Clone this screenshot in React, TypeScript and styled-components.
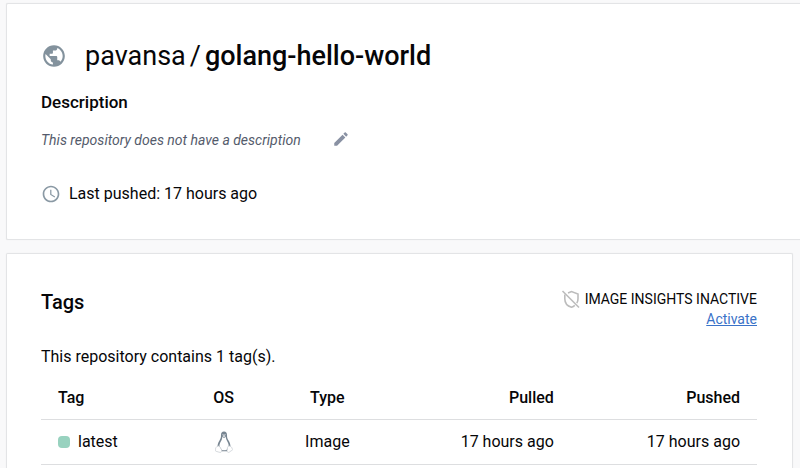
import React from "react";
import styled, { createGlobalStyle } from "styled-components";

const GlobalStyle = createGlobalStyle`
  *, *::before, *::after { box-sizing: border-box; }
  body {
    margin: 0;
    background: #f9f9fa;
    color: #060608;
    font-family: Roboto, "Open Sans", sans-serif;
    font-size: 16px;
    line-height: 20px;
  }
`;

const Page = styled.main`
  display: flex;
  flex-direction: column;
  gap: 13px;
  height: 100vh;
  overflow: hidden;
  padding: 3px 0 0 6px;
`;

const Card = styled.section<{ $bleed?: "right" | "bottom" }>`
  flex: ${(p) => (p.$bleed === "bottom" ? "1 0 auto" : "none")};
  margin-right: ${(p) => (p.$bleed === "right" ? "0" : "7px")};
  padding: 35px 35px 0 34px;
  background: #fff;
  border: 1px solid #e3e4e6;
  border-right-width: ${(p) => (p.$bleed === "right" ? "0" : "1px")};
  border-bottom-width: ${(p) => (p.$bleed === "bottom" ? "0" : "1px")};
  border-radius: ${(p) => (p.$bleed === "right" ? "2px 0 0 2px" : "2px 2px 0 0")};
  box-shadow: 0 0 1px #e3e4e6;
`;

const RepoHeading = styled.div`
  display: flex;
  align-items: center;
  gap: 18px;
`;

const RepoName = styled.h1`
  display: flex;
  gap: 4px;
  margin: 0;
  font-size: 27px;
  line-height: 34px;
  font-weight: 400;
  white-space: nowrap;
`;

const RepoSlug = styled.span`
  font-weight: 500;
`;

const DescriptionTitle = styled.h2`
  margin: 19px 0 0;
  font-size: 17px;
  line-height: 20px;
  font-weight: 500;
`;

const DescriptionRow = styled.div`
  display: flex;
  align-items: center;
  gap: 31px;
  margin-top: 18px;
`;

const EmptyDescription = styled.em`
  color: #545b6b;
  font-size: 14px;
`;

const EditButton = styled.button`
  display: flex;
  padding: 0 0 2px;
  border: 0;
  background: none;
  cursor: pointer;
`;

const PushedRow = styled.div`
  display: flex;
  align-items: center;
  gap: 8px;
  margin: 34px 0 35px;
`;

const TagsHeader = styled.header`
  display: flex;
  justify-content: space-between;
  align-items: flex-start;
`;

const TagsTitle = styled.h2`
  margin: 1px 0 0;
  font-size: 20px;
  line-height: 24px;
  font-weight: 500;
`;

const Insights = styled.div`
  display: flex;
  flex-direction: column;
  align-items: flex-end;
  font-size: 14px;
`;

const InsightsStatus = styled.div`
  display: flex;
  align-items: center;
  gap: 4px;
`;

const ActivateLink = styled.a`
  color: #3a72c8;
  text-decoration: underline;
`;

const TagCount = styled.p`
  margin: 18px 0 10px;
`;

const TagTable = styled.table`
  width: 100%;
  table-layout: fixed;
  border-collapse: collapse;
`;

const Column = styled.col<{ $width: number }>`
  width: ${(p) => p.$width}%;
`;

type Align = "left" | "center" | "right";

const HeadCell = styled.th<{ $align: Align }>`
  height: 42px;
  padding: 0 17px;
  border-bottom: 1px solid #dddee0;
  font-weight: 500;
  text-align: ${(p) => p.$align};
`;

const Cell = styled.td<{ $align: Align }>`
  height: 45px;
  padding: 0 17px;
  border-bottom: 1px solid #dddee0;
  text-align: ${(p) => p.$align};
`;

const TagLabel = styled.span`
  display: flex;
  align-items: center;
  gap: 8px;
`;

const StatusDot = styled.span`
  width: 12px;
  height: 12px;
  border-radius: 4px;
  background: #98d2bf;
`;

const Icon = styled.svg`
  display: block;
  flex: none;
`;

const CellIcon = styled(Icon)`
  margin: 0 auto;
`;

const GlobeIcon = () => (
  <Icon width="26" height="26" viewBox="0 0 24 24" fill="#83929d" aria-hidden="true">
    <path d="M12 2C6.48 2 2 6.48 2 12s4.48 10 10 10 10-4.48 10-10S17.52 2 12 2zm-1 17.93c-3.95-.49-7-3.85-7-7.93 0-.62.08-1.21.21-1.79L9 15v1c0 1.1.9 2 2 2v1.93zm6.9-2.54c-.26-.81-1-1.39-1.9-1.39h-1v-3c0-.55-.45-1-1-1H8v-2h2c.55 0 1-.45 1-1V7h2c1.1 0 2-.9 2-2v-.41c2.93 1.19 5 4.06 5 7.41 0 2.08-.8 3.97-2.1 5.39z" />
  </Icon>
);

const PencilIcon = () => (
  <Icon width="18" height="18" viewBox="0 0 24 24" fill="#8991a3" aria-hidden="true">
    <path d="M3 17.25V21h3.75L17.81 9.94l-3.75-3.75L3 17.25zM20.71 7.04c.39-.39.39-1.02 0-1.41l-2.34-2.34c-.39-.39-1.02-.39-1.41 0l-1.83 1.83 3.75 3.75 1.83-1.83z" />
  </Icon>
);

const ClockIcon = () => (
  <Icon width="20" height="20" viewBox="0 0 24 24" fill="#8a99a4" aria-hidden="true">
    <path d="M11.99 2C6.47 2 2 6.48 2 12s4.47 10 9.99 10C17.52 22 22 17.52 22 12S17.52 2 11.99 2zM12 20c-4.42 0-8-3.58-8-8s3.58-8 8-8 8 3.58 8 8-3.58 8-8 8zm.5-13H11v6l5.25 3.15.75-1.23-4.5-2.67z" />
  </Icon>
);

const ShieldOffIcon = () => (
  <Icon width="20" height="20" viewBox="0 0 20 20" fill="none" stroke="#bcbcbc" strokeWidth="1.6" aria-hidden="true">
    <path d="M1.500 2l16.500 16.500" />
    <path d="M7 4L10.500 2.600l6.500 2.400v4.700c0 1.700-.4 3.200-1.200 4.500M3.800 5.400v4.300c0 4.200 2.800 7.400 6.700 8.500 1.300-.4 2.400-1 3.300-1.800" />
  </Icon>
);

const LinuxIcon = () => (
  <CellIcon width="18" height="22" viewBox="0 0 18 22" role="img" aria-label="Linux">
    <path d="M9 .6C6.900.6 6 2.100 6 4c0 2.500-.3 3.500-1.500 5.400C3.200 11.600 2.300 13.600 2.600 16.200L6.500 20.300h5.400l3.500-4.200c.3-2.600-.7-4.800-2-6.800C12.200 7.500 12 6.300 12 4 12 2 11.100.6 9 .6z" fill="#778591" />
    <path d="M7.400 5.700L9 6.900l1.700-1.200c.2 2.200 1 3.600 1.900 5.300 1 1.900 1.500 3.600.7 5.200l-1.600 2.500c-1.500.8-3.800.8-5.200 0L4.500 15.500c-.3-1.600.4-3.300 1.300-4.900.9-1.700 1.500-2.900 1.600-4.900z" fill="#fff" />
    <path d="M7.300 4.900L9 4.100l1.700.8L9 6.300z" fill="#dfe3e7" />
    <circle cx="8" cy="3.500" r=".6" fill="#dfe3e7" />
    <circle cx="10" cy="3.500" r=".6" fill="#dfe3e7" />
    <path d="M3.400 14.900c1.200 0 2 1.800 3 3.500.9 1.600.2 3-1.300 3-1.300 0-2.500-.9-4-1.100-1-.2-.7-1-.5-2 .1-.8-.3-1.600.5-1.900 1-.3 1.200-1.500 2.300-1.500zM14.300 14.900c-1.200 0-1.800.8-1.900 2.500-.1 1.400-.7 2.600 0 3.500.9.9 2 .4 2.800-.4.7-.7 1.500-.9 2.200-1.400.6-.5.2-1-.2-1.500-.5-.6-.2-1.200-.8-1.500-.9-.4-.9-1.200-2.100-1.200z" fill="#fff" stroke="#c3c9cf" strokeWidth=".7" />
  </CellIcon>
);

const columns: { label: string; width: number; align: Align }[] = [
  { label: "Tag", width: 20, align: "left" },
  { label: "OS", width: 11, align: "center" },
  { label: "Type", width: 18, align: "center" },
  { label: "Pulled", width: 25, align: "right" },
  { label: "Pushed", width: 26, align: "right" },
];

const tags = [{ name: "latest", type: "Image", pulled: "17 hours ago", pushed: "17 hours ago" }];

export default function App() {
  return (
    <>
      <GlobalStyle />
      <Page>
        <Card $bleed="right">
          <RepoHeading>
            <GlobeIcon />
            <RepoName>
              <span>pavansa</span>
              <span>/</span>
              <RepoSlug>golang-hello-world</RepoSlug>
            </RepoName>
          </RepoHeading>
          <DescriptionTitle>Description</DescriptionTitle>
          <DescriptionRow>
            <EmptyDescription>This repository does not have a description</EmptyDescription>
            <EditButton type="button" aria-label="Edit description">
              <PencilIcon />
            </EditButton>
          </DescriptionRow>
          <PushedRow>
            <ClockIcon />
            <span>Last pushed: 17 hours ago</span>
          </PushedRow>
        </Card>

        <Card $bleed="bottom">
          <TagsHeader>
            <TagsTitle>Tags</TagsTitle>
            <Insights>
              <InsightsStatus>
                <ShieldOffIcon />
                <span>IMAGE INSIGHTS INACTIVE</span>
              </InsightsStatus>
              <ActivateLink href="#activate">Activate</ActivateLink>
            </Insights>
          </TagsHeader>
          <TagCount>This repository contains 1 tag(s).</TagCount>
          <TagTable>
            <colgroup>
              {columns.map((c) => (
                <Column key={c.label} $width={c.width} />
              ))}
            </colgroup>
            <thead>
              <tr>
                {columns.map((c) => (
                  <HeadCell key={c.label} scope="col" $align={c.align}>
                    {c.label}
                  </HeadCell>
                ))}
              </tr>
            </thead>
            <tbody>
              {tags.map((tag) => (
                <tr key={tag.name}>
                  <Cell $align="left">
                    <TagLabel>
                      <StatusDot />
                      {tag.name}
                    </TagLabel>
                  </Cell>
                  <Cell $align="center">
                    <LinuxIcon />
                  </Cell>
                  <Cell $align="center">{tag.type}</Cell>
                  <Cell $align="right">{tag.pulled}</Cell>
                  <Cell $align="right">{tag.pushed}</Cell>
                </tr>
              ))}
            </tbody>
          </TagTable>
        </Card>
      </Page>
    </>
  );
}
